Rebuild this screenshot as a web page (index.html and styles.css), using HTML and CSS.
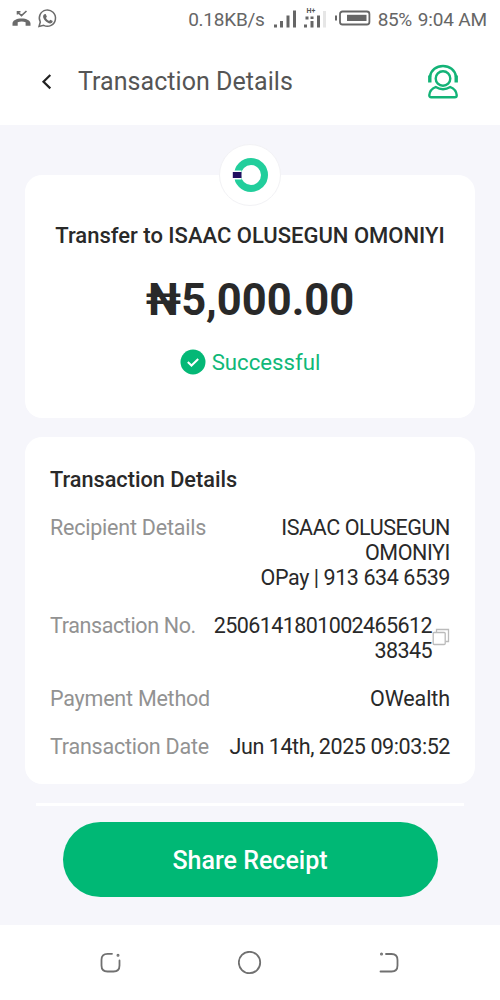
FILE: index.html
```html
<!DOCTYPE html>
<html lang="en">
<head>
<meta charset="utf-8">
<title>Transaction Details</title>
<link rel="stylesheet" href="styles.css">
</head>
<body>
<div class="status">
  <svg class="status-left" width="46" height="22" viewBox="0 0 46 22">
    <path d="M5.500 4l4 3.700 5-4.700M5.500 6.500V3.800h3" fill="none" stroke="#6b6b6b" stroke-width="1.600"/>
    <path d="M.5 15.500c0-3 4-5 9-5s9 2 9 5v2.200H13.600v-3.500q-3.800-1.200-7.900 0v3.500H.5z" fill="#6b6b6b"/>
    <path d="M27 18.500l1.300-4.500a8.100 8.100 0 1 1 3.400 3.300z" fill="none" stroke="#6b6b6b" stroke-width="1.500"/>
    <path d="M32.300 6.300l1.400-.3 1.200 2.700-1 1.300q1 2 3.200 3l1.200-1.200 2.500 1.300q-.2 2.200-2.500 2.300c-3.800-.3-7.300-4.200-7.200-7.200q.2-1.300 1.200-1.900z" fill="#6b6b6b"/>
  </svg>
  <span class="speed">0.18KB/s</span>
  <svg class="signal" width="56" height="28" viewBox="0 0 56 28">
    <g fill="#666"><rect x="1" y="19.500" width="3" height="3"/><rect x="7" y="16" width="3" height="6.500"/><rect x="13.500" y="10.500" width="3" height="12"/><rect x="20" y="5.500" width="3" height="17"/>
    <rect x="31" y="19.500" width="3" height="3"/><rect x="32.500" y="11.500" width="3" height="3"/><rect x="37.500" y="11.500" width="3" height="2.500"/><rect x="37.500" y="16" width="3" height="6.500"/><rect x="44" y="10.500" width="3" height="12"/></g>
    <rect x="50" y="6" width="3" height="16.500" fill="#e6e6e6"/>
    <text x="33.500" y="7.500" class="net">H+</text>
  </svg>
  <svg class="battery" width="36" height="18" viewBox="0 0 36 18">
    <rect x="5" y="1.500" width="29.400" height="13" rx="2.500" fill="none" stroke="#666" stroke-width="1.800"/>
    <rect x="12" y="4.800" width="19.500" height="6.200" fill="#666"/><rect x="0" y="5.500" width="2" height="5" fill="#666"/>
  </svg>
  <span class="percent">85%</span>
  <span class="clock">9:04 AM</span>
</div>
<header class="header">
  <svg class="back" width="12" height="18" viewBox="0 0 12 18"><path d="M10.300 2L3.500 8.700l6.800 6.700" fill="none" stroke="#222" stroke-width="2.200"/></svg>
  <h1>Transaction Details</h1>
  <svg class="support" width="34" height="36" viewBox="0 0 34 36" fill="none" stroke="#13b377" stroke-width="2.400">
    <circle cx="17" cy="14.500" r="7.300"/>
    <path d="M4 12.500C5 6 10.500 2 17 2S29 6 30 12.500"/>
    <path d="M3.800 11.500v7M30.200 11.500v7" stroke-width="3.400"/>
    <path d="M9.700 23q7.300 4.400 14.600 0 5.800 2.200 6.400 8.200 0 2.100-1.900 2.100H5.200q-1.900 0-1.900-2.100.6-6 6.400-8.200z" stroke-linejoin="round"/>
  </svg>
</header>
<main class="content">
  <section class="card summary">
    <div class="logo"><svg width="36" height="36" viewBox="0 0 36 36"><circle cx="19" cy="18" r="13.500" fill="none" stroke="#22ce9c" stroke-width="7"/><path d="M0 13.500h9.500v9H0z" fill="#fff"/><path d="M.8 15h8.700v6H.8z" fill="#210f60"/></svg></div>
    <p class="payee">Transfer to ISAAC OLUSEGUN OMONIYI</p>
    <p class="amount">₦5,000.00</p>
    <p class="state"><svg width="26" height="26" viewBox="0 0 26 26"><circle cx="13" cy="13" r="12.500" fill="#04b876"/><path d="M7.800 13l3.700 3.500 6.700-6.500" fill="none" stroke="#fff" stroke-width="2"/></svg><span>Successful</span></p>
  </section>
  <section class="card details">
    <h2>Transaction Details</h2>
    <div class="row"><span class="label">Recipient Details</span><span class="value">ISAAC OLUSEGUN<br>OMONIYI<br>OPay | 913 634 6539</span></div>
    <div class="row"><span class="label reference">Transaction No.</span><span class="value number"><span>2506141801002465612<br>38345</span><svg width="18" height="18" viewBox="0 0 18 18" fill="none" stroke="#bbb" stroke-width="1.300"><rect x="1.200" y="4.500" width="12" height="12" rx="1"/><path d="M4.500 4.500V1.500h12v12h-3"/></svg></span></div>
    <div class="row"><span class="label">Payment Method</span><span class="value method">OWealth</span></div>
    <div class="row"><span class="label">Transaction Date</span><span class="value">Jun 14th, 2025 09:03:52</span></div>
  </section>
  <div class="next-card"></div>
  <button class="share">Share Receipt</button>
</main>
<nav class="nav">
  <svg width="24" height="24" viewBox="0 0 24 24"><path d="M14 2.800H9.500q-6 0-6 6v5.700q0 6 6 6h6q6 0 6-6V9.500"/><circle cx="20" cy="4.200" r=".6"/></svg>
  <svg width="24" height="24" viewBox="0 0 24 24"><circle cx="11.500" cy="11.500" r="10.700"/></svg>
  <svg width="24" height="24" viewBox="0 0 24 24"><path d="M9 3h5.500q6 0 6 6v5.500q0 6-6 6H3.500"/><circle cx="4.500" cy="3" r=".6"/></svg>
</nav>
</body>
</html>
```
FILE: styles.css
```css
* { box-sizing: border-box; }
body { margin: 0; width: 500px; height: 1000px; overflow: hidden; background: #fff; font-family: Roboto, "Noto Sans", sans-serif; color: #292929; }
h1, h2, p { margin: 0; }
svg { display: block; flex: none; }
span { white-space: nowrap; }
.status { display: flex; align-items: center; height: 38px; padding: 0 13px 0 12px; color: #666; font-size: 19px; }
.status-left { margin-right: auto; }
.speed { letter-spacing: -0.250px; }
.signal { margin-left: 8px; }
.net { font: 700 7px Roboto, sans-serif; fill: #555; }
.battery { margin: 0 7px 0 6px; }
.percent { letter-spacing: -0.400px; }
.clock { margin-left: 6px; letter-spacing: -0.150px; }
.header { display: flex; align-items: center; height: 87px; padding: 0 40px 0 40px; }
.back { margin-right: 26px; }
h1 { font-size: 25px; font-weight: 400; color: #555; line-height: 30px; letter-spacing: 0.050px; white-space: nowrap; }
.support { margin-left: auto; }
.content { height: 800px; padding: 50px 25px 0; background: #f6f6fb; display: flex; flex-direction: column; }
.card { background: #fff; border-radius: 17px; flex: none; }
.summary { position: relative; height: 243px; margin-bottom: 19px; padding-top: 47px; display: flex; flex-direction: column; align-items: center; }
.logo { position: absolute; top: -31px; left: 194px; width: 62px; height: 62px; border: 1px solid #f2f2f5; border-radius: 50%; background: #fff; display: flex; align-items: center; justify-content: center; }
.payee { font-size: 22px; font-weight: 500; line-height: 28px; white-space: nowrap; }
.amount { margin-top: 27px; font-size: 43.500px; font-weight: 700; line-height: 48px; }
.state { display: flex; align-items: center; gap: 6px; margin-top: 23px; font-size: 22.200px; line-height: 28px; color: #10b878; }
.details { height: 347px; padding: 30px 25px 0; display: flex; flex-direction: column; gap: 23px; font-size: 21.500px; line-height: 25px; }
h2 { font-size: 21.700px; font-weight: 500; line-height: 25px; }
.row { display: flex; justify-content: space-between; }
.label { color: #929292; letter-spacing: -0.220px; }
.reference { letter-spacing: -0.380px; }
.value { text-align: right; letter-spacing: -0.420px; }
.number { display: flex; align-items: center; letter-spacing: -0.600px; }
.number svg { position: relative; top: -1px; }
.method { letter-spacing: -0.100px; }
.next-card { height: 3px; margin: 19px 11px 0; background: #fff; flex: none; }
.share { width: 375px; height: 75px; margin: 16px auto 0; padding: 2px 0 0; border: 0; border-radius: 38px; background: #00b875; color: #fff; font: 500 25px Roboto, sans-serif; flex: none; }
.nav { display: flex; justify-content: space-between; align-items: center; height: 75px; padding: 0 99px 0 98px; }
.nav svg { fill: none; stroke: #707070; stroke-width: 1.800; stroke-linecap: round; }
```
